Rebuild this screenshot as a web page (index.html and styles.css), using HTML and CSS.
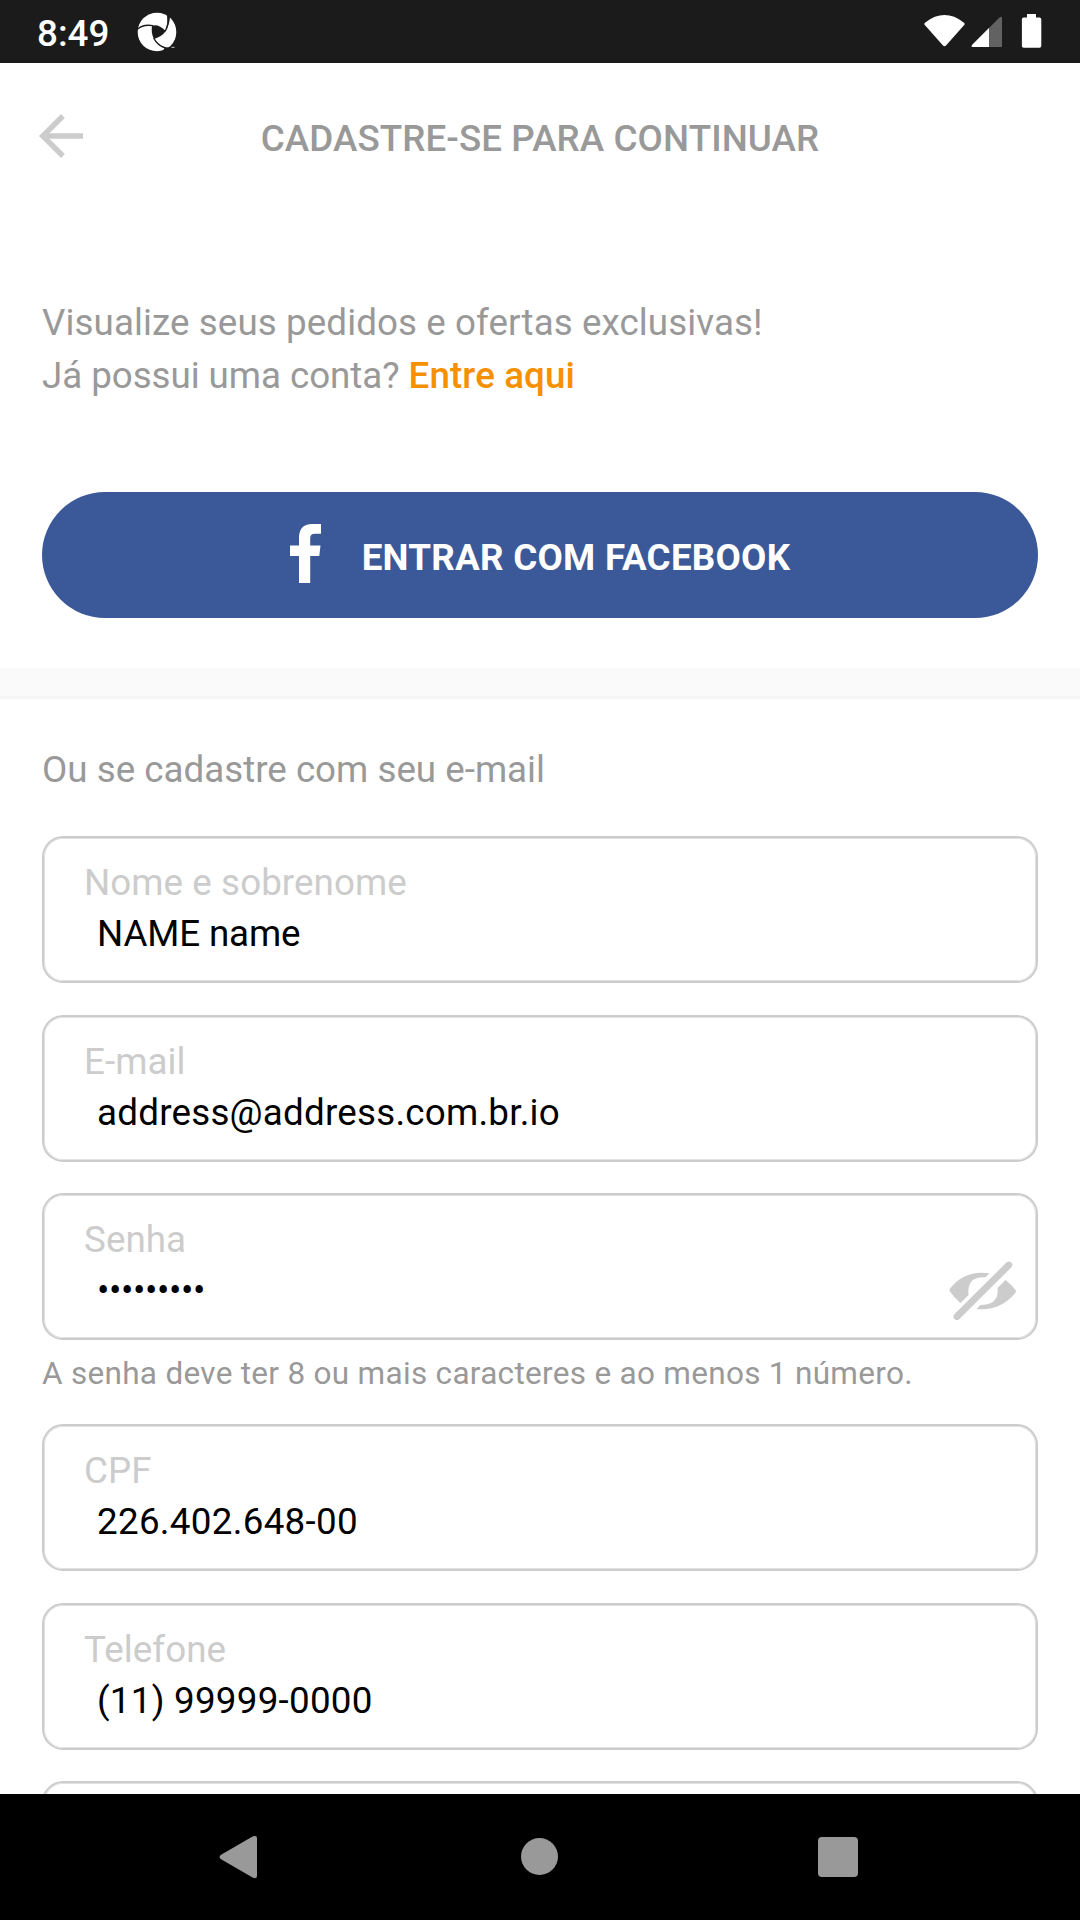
FILE: index.html
```html
<!DOCTYPE html>
<html lang="pt-BR">
<head>
<meta charset="utf-8">
<title>Cadastre-se para continuar</title>
<link rel="stylesheet" href="styles.css">
</head>
<body>
<div class="screen">
  <div class="status-bar">
    <span class="clock">8:49</span>
    <svg class="app-icon" width="40" height="40" viewBox="0 0 40 40">
      <circle cx="20" cy="20" r="19.3" fill="#fff"/>
      <g fill="#1b1b1b">
        <path d="M15 13.8Q21 11.2 28.8 19Q25 24.6 17 27Q13.8 21 15 13.8Z"/>
      </g>
      <g fill="none" stroke="#1b1b1b" stroke-width="1.3">
        <path d="M0.8 17Q6 12 16 13.7"/>
        <path d="M28.2 19.3Q32.3 12 30.8 3.5"/>
        <path d="M16.6 26Q21 34 29 36.2L38 36"/>
      </g>
      <path d="M30 2L33 5Q32.5 13 28.4 18.8Q31.5 11 30 2Z" fill="#1b1b1b"/>
      <path d="M16.8 27Q20 33.5 27.5 36.2L25.5 39L35 36Q24 36.5 16.8 27Z" fill="#1b1b1b"/>
      <rect x="34.5" y="34.8" width="3" height="1.2" fill="#aaa"/>
    </svg>
    <svg class="system-icons" width="120" height="36" viewBox="0 0 120 36">
      <path d="M1.3 8.4Q20.500 -6.400 39.700 8.400Q41.300 9.600 40.200 11L22 31.500Q20.500 33 19 31.500L.8 11Q-.3 9.600 1.300 8.400Z" fill="#fff"/>
      <path d="M49 30L75 4Q78 1.300 78 4V33H49Q46 33 49 30Z" fill="#626262"/>
      <path d="M49 30L65 14V33H49Q46 33 49 30Z" fill="#fff"/>
      <path d="M103 0H112V3.500H115.500Q117.300 3.500 117.300 5.300V32Q117.300 33.800 115.500 33.800H99.700Q97.900 33.800 97.900 32V5.300Q97.900 3.500 99.700 3.500H103Z" fill="#fff"/>
    </svg>
  </div>

  <header class="header">
    <svg class="back" width="66" height="66" viewBox="0 0 24 24">
      <path d="M20 11H7.830l5.590-5.590L12 4l-8 8 8 8 1.410-1.410L7.830 13H20z" fill="#ccc"/>
    </svg>
    <h1 class="title">CADASTRE-SE PARA CONTINUAR</h1>
  </header>

  <section class="intro">
    <p class="lead"><span class="lead-offer">Visualize seus pedidos e ofertas exclusivas!</span><br><span class="lead-account">Já possui uma conta? </span><a class="login">Entre aqui</a></p>
    <div class="facebook">
      <svg width="31" height="59" viewBox="0 0 31 59">
        <path d="M9 59V32H0V21.500H9V14Q9 0 22 0H31V9.800H25Q20.200 9.800 20.200 14V21.500H30.500L29.300 32H20.200V59Z" fill="#fff"/>
      </svg>
      <span class="facebook-label">ENTRAR COM FACEBOOK</span>
    </div>
  </section>

  <div class="divider"></div>

  <main class="form">
    <p class="form-title">Ou se cadastre com seu e-mail</p>
    <div class="field name"><span class="label">Nome e sobrenome</span><span class="value">NAME name</span></div>
    <div class="field email"><span class="label">E-mail</span><span class="value">address@address.com.br.io</span></div>
    <div class="field password">
      <div class="texts"><span class="label">Senha</span><span class="value dots">•••••••••</span></div>
      <svg class="eye" width="68" height="60" viewBox="0 0 68 60">
        <path fill="#ccc" d="M11.500 42Q5 36.500 1 30.500Q0 29 1 27.500Q16 8.500 40.500 12.300L36.500 16.200Q17.500 15 19.500 34ZM56.500 19Q63 24 66.500 29Q67.300 30.500 66.500 31.800Q51 50.500 27.500 48L31.500 44Q50.500 44 48.500 27Z"/>
        <path fill="none" stroke="#ccc" stroke-width="6.800" stroke-linecap="round" d="M8 55.500L59.800 4"/>
      </svg>
    </div>
    <p class="hint">A senha deve ter 8 ou mais caracteres e ao menos 1 número.</p>
    <div class="field cpf"><span class="label">CPF</span><span class="value">226.402.648-00</span></div>
    <div class="field phone"><span class="label">Telefone</span><span class="value">(11) 99999-0000</span></div>
    <div class="field next"></div>
  </main>

  <nav class="nav-bar">
    <svg width="1080" height="126" viewBox="0 0 1080 126">
      <path d="M221.500 60.500L253 42.300Q257 41 257 44V82Q257 85 253 83.800L221.500 65.500Q217.500 63 221.500 60.500Z" fill="#999"/>
      <circle cx="539.500" cy="62.500" r="18.500" fill="#999"/>
      <rect x="818" y="43" width="40" height="40" rx="4" fill="#999"/>
    </svg>
  </nav>
</div>
</body>
</html>
```

FILE: styles.css
```css
* { box-sizing: border-box; }

body {
  margin: 0;
  background: #fff;
  font-family: Roboto, "Liberation Sans", sans-serif;
  font-size: 36.75px;
  line-height: 43px;
  color: #999;
}

h1, p { margin: 0; }
svg { display: block; flex: none; }

.screen {
  width: 1080px;
  height: 1920px;
  display: flex;
  flex-direction: column;
  overflow: hidden;
}

.status-bar {
  flex: none;
  height: 63px;
  display: flex;
  align-items: flex-start;
  padding: 12px 36px 0 37px;
  background: #1b1b1b;
}
.clock { width: 100px; color: #fff; font-weight: 500; }
.system-icons { margin: 2px 0 0 auto; }

.header {
  flex: none;
  height: 233px;
  display: grid;
  grid-template-columns: 66px 1fr 66px;
  align-items: start;
  padding: 40px 28px 0;
}
.title {
  padding-top: 14px;
  text-align: center;
  font-size: inherit;
  font-weight: 500;
  letter-spacing: 0.09px;
}

.intro { flex: none; height: 372px; padding: 0 42px; }
.lead { height: 196px; line-height: 53px; }
.lead-offer { letter-spacing: 0.085px; }
.lead-account { letter-spacing: -0.06px; }
.login { color: #f59100; font-weight: 500; letter-spacing: 0.12px; }

.facebook {
  height: 126px;
  display: flex;
  align-items: center;
  justify-content: center;
  gap: 41px;
  border-radius: 63px;
  background: #3b5998;
}
.facebook svg { margin-bottom: 3px; }
.facebook-label {
  padding-top: 4px;
  color: #fff;
  font-weight: 700;
  letter-spacing: 0.25px;
}

.divider {
  flex: none;
  height: 31px;
  border-bottom: 3px solid #f5f5f5;
  background: #fafafa;
}

.form { flex: 1; min-height: 0; overflow: hidden; padding: 49px 42px 0; }
.form-title { height: 88px; }

.field {
  height: 147px;
  display: flex;
  flex-direction: column;
  padding: 23px 19px 0 40px;
  border: 2px solid #ccc;
  border-radius: 21px;
  box-shadow: inset 0 0 0 1px #e2e2e2;
}
.label { height: 51px; color: #ccc; letter-spacing: 0.07px; }
.value { padding-left: 13px; color: #000; }
.name .value { letter-spacing: -0.13px; }
.email { margin-top: 32px; }
.email .value { letter-spacing: 0.23px; }
.password {
  margin-top: 31px;
  flex-direction: row;
  justify-content: space-between;
}
.password .value { letter-spacing: -0.4px; }
.texts { display: flex; flex-direction: column; }
.eye { margin-top: 43px; }
.hint {
  height: 84px;
  padding-top: 15px;
  font-size: 31.5px;
  line-height: 37px;
  letter-spacing: 0.3px;
}
.cpf .value { letter-spacing: 0.3px; }
.phone { margin-top: 32px; }
.phone .value { letter-spacing: 0.25px; }
.next { margin-top: 31px; }

.nav-bar { flex: none; height: 126px; background: #000; }
```
